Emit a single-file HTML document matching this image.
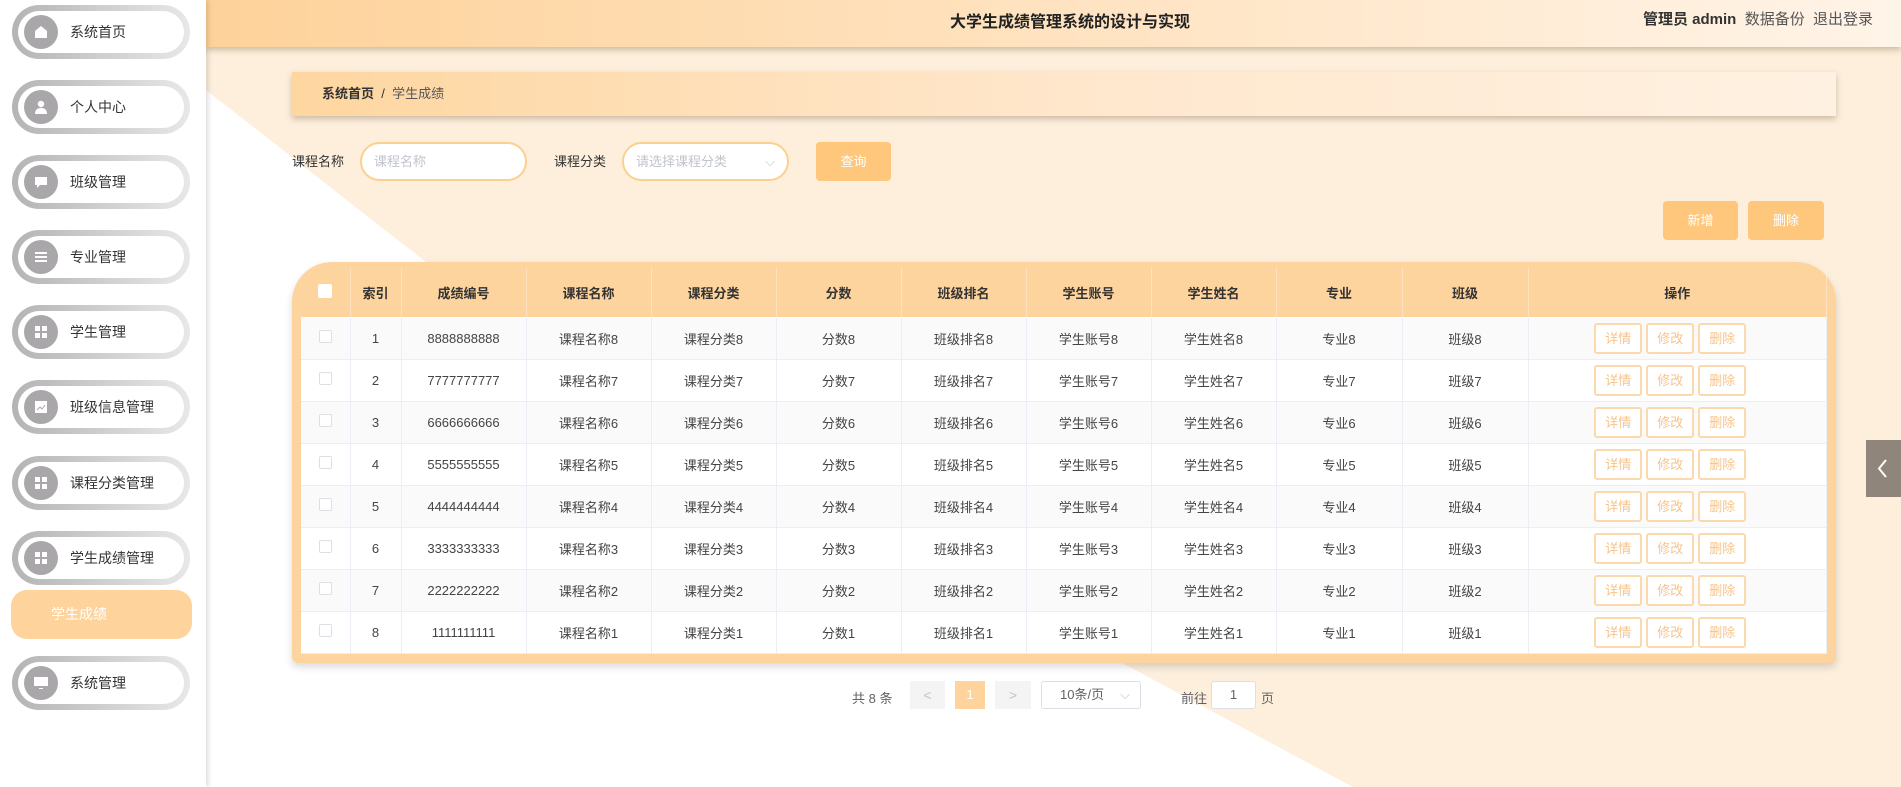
<!DOCTYPE html>
<html><head><meta charset="utf-8"><style>
*{margin:0;padding:0;box-sizing:border-box}
body{width:1901px;height:787px;overflow:hidden;position:relative;background:#fff;font-family:"Liberation Sans","Noto Sans CJK SC",sans-serif;font-size:14px;color:#333}
.a{position:absolute}
.peach{left:206px;top:0;width:1695px;height:787px;background:#fdefdc;clip-path:polygon(0 0,1695px 0,1695px 787px,1147px 787px,330px 348px,0 90px)}
.hdr{left:206px;top:0;width:1695px;height:47px;background:linear-gradient(90deg,#fed29a,#ffe6c8 60%,#fff4e8);box-shadow:0 3px 6px rgba(120,90,60,.35)}
.side{left:0;top:0;width:206px;height:787px;background:#fff;box-shadow:2px 0 5px rgba(0,0,0,.15)}
.pill{left:12px;width:178px;height:54px;border-radius:27px;background:linear-gradient(90deg,#b4b4b4,#e8e8e8);padding:6px}
.pill .in{width:100%;height:100%;border-radius:21px;background:#fff;position:relative}
.pill .ic{position:absolute;left:6px;top:4px;width:34px;height:34px;border-radius:50%;background:#aaa7aa}
.pill .ic svg{position:absolute;left:9px;top:9px}
.pill .t{position:absolute;left:52px;top:0;line-height:42px;font-size:14px;color:#333}
.bc{left:292px;top:72px;width:1544px;height:44px;background:linear-gradient(90deg,#fed6a0,#ffe7cc 50%,#fff1e2);box-shadow:0 3px 6px rgba(120,90,60,.35);line-height:44px;padding-left:30px;font-size:13px}
.inp{height:39px;border:2px solid #fcd08d;border-radius:20px;background:#fff;color:#c0c4cc;font-size:13px;line-height:35px;padding-left:12px}
.btn{background:#fec77c;color:#fff;border-radius:4px;text-align:center;font-size:13px}
.tbl{left:292px;top:262px;width:1544px;height:401px;background:#fdd39e;border-radius:40px 40px 6px 6px;box-shadow:0 4px 8px rgba(0,0,0,.15)}
table{position:absolute;left:301px;top:268px;border-collapse:collapse;width:1526px;table-layout:fixed}
td,th{text-align:center;border-right:1px solid #ebeef5;border-bottom:1px solid #ebeef5;font-size:13px}
th{height:49px;font-weight:bold;color:#333;border-color:rgba(255,255,255,.35)}
td{height:42px;background:#fff;color:#444}
tr:nth-child(even) td{background:#fafafa}
.cb{display:inline-block;width:13px;height:13px;border:1px solid #dcdfe6;border-radius:2px;background:#fff}
th .cb{width:14px;height:14px;border-color:#fff}
.ob{display:inline-block;width:48px;height:31px;line-height:27px;border:2px solid #fcd9ac;border-radius:3px;color:#f6c48b;font-size:13px;margin:0 2px;background:#fff}
.pg{font-size:13px;color:#606266}
.ops{padding-right:14px}
</style></head><body>
<div class="a peach"></div>
<div class="a hdr"></div>
<div class="a" style="left:950px;top:8px;font-size:16px;font-weight:bold;color:#222">大学生成绩管理系统的设计与实现</div>
<div class="a" style="left:1643px;top:8px;font-size:15px;color:#333"><b>管理员 admin</b>&nbsp; <span style="color:#555">数据备份</span>&nbsp; <span style="color:#555">退出登录</span></div>
<div class="a side"></div>
<div class="a pill" style="top:5px"><div class="in"><div class="ic"><svg width="16" height="16" viewBox="0 0 16 16"><path d="M8 2 L14 7 V14 H2 V7 Z" fill="#fff"/></svg></div><div class="t">系统首页</div></div></div>
<div class="a pill" style="top:80px"><div class="in"><div class="ic"><svg width="16" height="16" viewBox="0 0 16 16"><circle cx="8" cy="5" r="3.2" fill="#fff"/><path d="M2 15 Q2 9 8 9 Q14 9 14 15Z" fill="#fff"/></svg></div><div class="t">个人中心</div></div></div>
<div class="a pill" style="top:155px"><div class="in"><div class="ic"><svg width="16" height="16" viewBox="0 0 16 16"><path d="M2 3H14V11H7L4 14V11H2Z" fill="#fff"/></svg></div><div class="t">班级管理</div></div></div>
<div class="a pill" style="top:230px"><div class="in"><div class="ic"><svg width="16" height="16" viewBox="0 0 16 16"><path d="M2 3H14V5H2ZM2 7H14V9H2ZM2 11H14V13H2Z" fill="#fff"/></svg></div><div class="t">专业管理</div></div></div>
<div class="a pill" style="top:305px"><div class="in"><div class="ic"><svg width="16" height="16" viewBox="0 0 16 16"><path d="M2 2H7V7H2ZM9 2H14V7H9ZM2 9H7V14H2ZM9 9H14V14H9Z" fill="#fff"/></svg></div><div class="t">学生管理</div></div></div>
<div class="a pill" style="top:380px"><div class="in"><div class="ic"><svg width="16" height="16" viewBox="0 0 16 16"><path d="M2 2H14V14H2Z" fill="#fff"/><path d="M4 11 L7 8 L9 10 L12 6" stroke="#aaa7aa" fill="none"/></svg></div><div class="t">班级信息管理</div></div></div>
<div class="a pill" style="top:456px"><div class="in"><div class="ic"><svg width="16" height="16" viewBox="0 0 16 16"><path d="M2 2H7V7H2ZM9 2H14V7H9ZM2 9H7V14H2ZM9 9H14V14H9Z" fill="#fff"/></svg></div><div class="t">课程分类管理</div></div></div>
<div class="a pill" style="top:531px"><div class="in"><div class="ic"><svg width="16" height="16" viewBox="0 0 16 16"><path d="M2 2H7V7H2ZM9 2H14V7H9ZM2 9H7V14H2ZM9 9H14V14H9Z" fill="#fff"/></svg></div><div class="t">学生成绩管理</div></div></div>
<div class="a" style="left:11px;top:590px;width:181px;height:49px;border-radius:16px;background:#fed39c;color:#fff;line-height:49px;padding-left:40px;font-size:14px">学生成绩</div>
<div class="a pill" style="top:656px"><div class="in"><div class="ic"><svg width="16" height="16" viewBox="0 0 16 16"><path d="M1 2H15V11H1ZM6 13H10V14H6Z" fill="#fff"/></svg></div><div class="t">系统管理</div></div></div>
<div class="a bc"><b>系统首页</b>&nbsp; / &nbsp;<span style="color:#555">学生成绩</span></div>
<div class="a" style="left:292px;top:151px;font-size:13px">课程名称</div>
<div class="a inp" style="left:360px;top:142px;width:167px">课程名称</div>
<div class="a" style="left:554px;top:151px;font-size:13px">课程分类</div>
<div class="a inp" style="left:622px;top:142px;width:167px">请选择课程分类<span style="position:absolute;right:12px;color:#c0c4cc">⌵</span></div>
<div class="a btn" style="left:816px;top:142px;width:75px;height:39px;line-height:39px">查询</div>
<div class="a btn" style="left:1663px;top:201px;width:75px;height:39px;line-height:39px">新增</div>
<div class="a btn" style="left:1748px;top:201px;width:76px;height:39px;line-height:39px">删除</div>
<div class="a tbl"></div>
<table>
<colgroup><col style="width:49px"><col style="width:51px"><col style="width:125px"><col style="width:125px"><col style="width:125px"><col style="width:125px"><col style="width:125px"><col style="width:125px"><col style="width:125px"><col style="width:126px"><col style="width:126px"><col></colgroup>
<tr><th><span class="cb"></span></th><th>索引</th><th>成绩编号</th><th>课程名称</th><th>课程分类</th><th>分数</th><th>班级排名</th><th>学生账号</th><th>学生姓名</th><th>专业</th><th>班级</th><th>操作</th></tr>
<tr><td><span class="cb"></span></td><td>1</td><td>8888888888</td><td>课程名称8</td><td>课程分类8</td><td>分数8</td><td>班级排名8</td><td>学生账号8</td><td>学生姓名8</td><td>专业8</td><td>班级8</td><td class="ops"><span class="ob">详情</span><span class="ob">修改</span><span class="ob">删除</span></td></tr>
<tr><td><span class="cb"></span></td><td>2</td><td>7777777777</td><td>课程名称7</td><td>课程分类7</td><td>分数7</td><td>班级排名7</td><td>学生账号7</td><td>学生姓名7</td><td>专业7</td><td>班级7</td><td class="ops"><span class="ob">详情</span><span class="ob">修改</span><span class="ob">删除</span></td></tr>
<tr><td><span class="cb"></span></td><td>3</td><td>6666666666</td><td>课程名称6</td><td>课程分类6</td><td>分数6</td><td>班级排名6</td><td>学生账号6</td><td>学生姓名6</td><td>专业6</td><td>班级6</td><td class="ops"><span class="ob">详情</span><span class="ob">修改</span><span class="ob">删除</span></td></tr>
<tr><td><span class="cb"></span></td><td>4</td><td>5555555555</td><td>课程名称5</td><td>课程分类5</td><td>分数5</td><td>班级排名5</td><td>学生账号5</td><td>学生姓名5</td><td>专业5</td><td>班级5</td><td class="ops"><span class="ob">详情</span><span class="ob">修改</span><span class="ob">删除</span></td></tr>
<tr><td><span class="cb"></span></td><td>5</td><td>4444444444</td><td>课程名称4</td><td>课程分类4</td><td>分数4</td><td>班级排名4</td><td>学生账号4</td><td>学生姓名4</td><td>专业4</td><td>班级4</td><td class="ops"><span class="ob">详情</span><span class="ob">修改</span><span class="ob">删除</span></td></tr>
<tr><td><span class="cb"></span></td><td>6</td><td>3333333333</td><td>课程名称3</td><td>课程分类3</td><td>分数3</td><td>班级排名3</td><td>学生账号3</td><td>学生姓名3</td><td>专业3</td><td>班级3</td><td class="ops"><span class="ob">详情</span><span class="ob">修改</span><span class="ob">删除</span></td></tr>
<tr><td><span class="cb"></span></td><td>7</td><td>2222222222</td><td>课程名称2</td><td>课程分类2</td><td>分数2</td><td>班级排名2</td><td>学生账号2</td><td>学生姓名2</td><td>专业2</td><td>班级2</td><td class="ops"><span class="ob">详情</span><span class="ob">修改</span><span class="ob">删除</span></td></tr>
<tr><td><span class="cb"></span></td><td>8</td><td>1111111111</td><td>课程名称1</td><td>课程分类1</td><td>分数1</td><td>班级排名1</td><td>学生账号1</td><td>学生姓名1</td><td>专业1</td><td>班级1</td><td class="ops"><span class="ob">详情</span><span class="ob">修改</span><span class="ob">删除</span></td></tr>
</table>
<div class="a pg" style="left:852px;top:688px">共 8 条</div>
<div class="a" style="left:910px;top:681px;width:35px;height:28px;background:#f4f4f5;color:#c0c4cc;text-align:center;line-height:28px">&lt;</div>
<div class="a" style="left:955px;top:681px;width:30px;height:28px;background:#fed39c;color:#fff;text-align:center;line-height:28px;font-size:13px">1</div>
<div class="a" style="left:995px;top:681px;width:36px;height:28px;background:#f4f4f5;color:#c0c4cc;text-align:center;line-height:28px">&gt;</div>
<div class="a pg" style="left:1041px;top:681px;width:100px;height:28px;border:1px solid #dcdfe6;border-radius:3px;line-height:26px;padding-left:18px;background:#fff">10条/页<span style="position:absolute;right:10px;color:#c0c4cc">⌵</span></div>
<div class="a pg" style="left:1181px;top:688px">前往</div>
<div class="a pg" style="left:1211px;top:681px;width:45px;height:28px;border:1px solid #dcdfe6;border-radius:3px;line-height:26px;text-align:center;background:#fff">1</div>
<div class="a pg" style="left:1261px;top:688px">页</div>
<div class="a" style="left:1866px;top:440px;width:35px;height:57px;background:#8f857a"><svg width="35" height="57" viewBox="0 0 35 57"><path d="M20 20 L13 28.5 L20 37" stroke="#fff" stroke-width="2" fill="none"/></svg></div>
</body></html>
